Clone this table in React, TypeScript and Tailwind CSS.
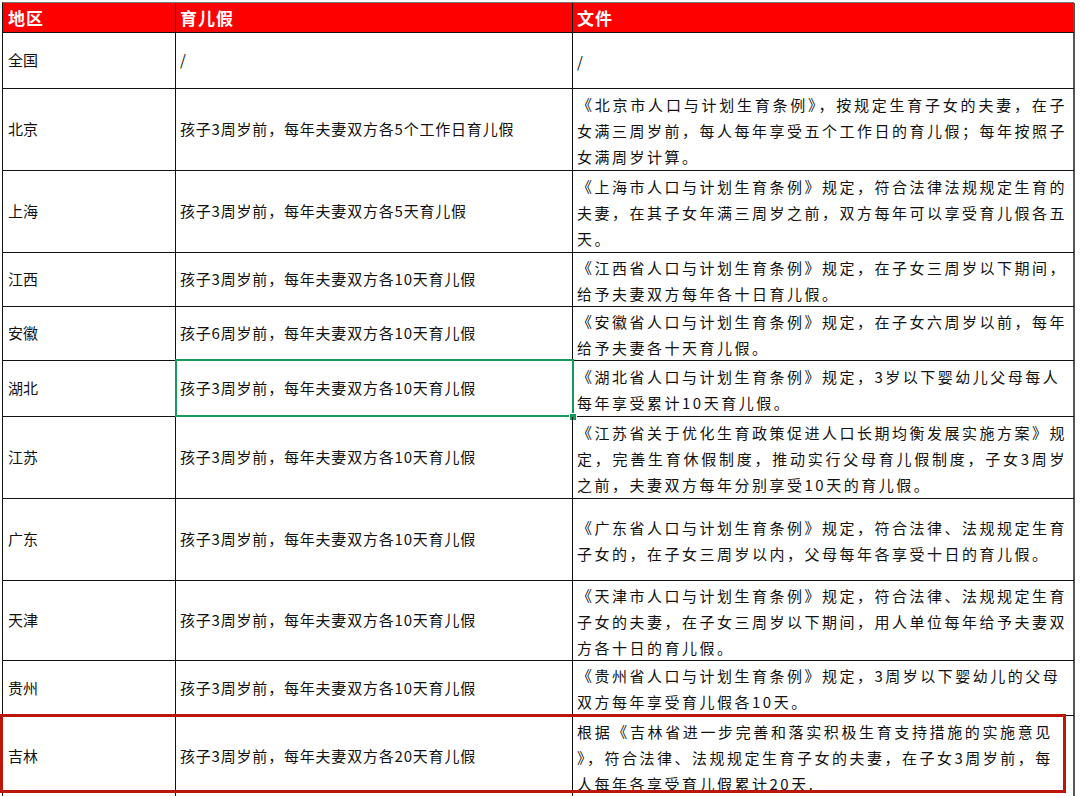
const FONT = "font-['Noto_Sans_CJK_SC','Noto_Sans',sans-serif]";

interface Row {
  region: string;
  leave: string;
  doc: string[];
  h: string;
  selected?: boolean;
}

const rows: Row[] = [
  { region: "全国", leave: "/", doc: ["/"], h: "h-[56px]" },
  {
    region: "北京",
    leave: "孩子3周岁前，每年夫妻双方各5个工作日育儿假",
    doc: [
      "《北京市人口与计划生育条例》，按规定生育子女的夫妻，在子",
      "女满三周岁前，每人每年享受五个工作日的育儿假；每年按照子",
      "女满周岁计算。",
    ],
    h: "h-[82px]",
  },
  {
    region: "上海",
    leave: "孩子3周岁前，每年夫妻双方各5天育儿假",
    doc: [
      "《上海市人口与计划生育条例》规定，符合法律法规规定生育的",
      "夫妻，在其子女年满三周岁之前，双方每年可以享受育儿假各五",
      "天。",
    ],
    h: "h-[82px]",
  },
  {
    region: "江西",
    leave: "孩子3周岁前，每年夫妻双方各10天育儿假",
    doc: ["《江西省人口与计划生育条例》规定，在子女三周岁以下期间，", "给予夫妻双方每年各十日育儿假。"],
    h: "h-[54px]",
  },
  {
    region: "安徽",
    leave: "孩子6周岁前，每年夫妻双方各10天育儿假",
    doc: ["《安徽省人口与计划生育条例》规定，在子女六周岁以前，每年", "给予夫妻各十天育儿假。"],
    h: "h-[54px]",
  },
  {
    region: "湖北",
    leave: "孩子3周岁前，每年夫妻双方各10天育儿假",
    doc: ["《湖北省人口与计划生育条例》规定，3岁以下婴幼儿父母每人", "每年享受累计10天育儿假。"],
    h: "h-[56px]",
    selected: true,
  },
  {
    region: "江苏",
    leave: "孩子3周岁前，每年夫妻双方各10天育儿假",
    doc: [
      "《江苏省关于优化生育政策促进人口长期均衡发展实施方案》规",
      "定，完善生育休假制度，推动实行父母育儿假制度，子女3周岁",
      "之前，夫妻双方每年分别享受10天的育儿假。",
    ],
    h: "h-[82px]",
  },
  {
    region: "广东",
    leave: "孩子3周岁前，每年夫妻双方各10天育儿假",
    doc: ["《广东省人口与计划生育条例》规定，符合法律、法规规定生育", "子女的，在子女三周岁以内，父母每年各享受十日的育儿假。"],
    h: "h-[82px]",
  },
  {
    region: "天津",
    leave: "孩子3周岁前，每年夫妻双方各10天育儿假",
    doc: [
      "《天津市人口与计划生育条例》规定，符合法律、法规规定生育",
      "子女的夫妻，在子女三周岁以下期间，用人单位每年给予夫妻双",
      "方各十日的育儿假。",
    ],
    h: "h-[80px]",
  },
  {
    region: "贵州",
    leave: "孩子3周岁前，每年夫妻双方各10天育儿假",
    doc: ["《贵州省人口与计划生育条例》规定，3周岁以下婴幼儿的父母", "双方每年享受育儿假各10天。"],
    h: "h-[55px]",
  },
  {
    region: "吉林",
    leave: "孩子3周岁前，每年夫妻双方各20天育儿假",
    doc: [
      "根据《吉林省进一步完善和落实积极生育支持措施的实施意见",
      "》，符合法律、法规规定生育子女的夫妻，在子女3周岁前，每",
      "人每年各享受育儿假累计20天.",
    ],
    h: "h-[82px]",
  },
];

function DocCell({ lines }: { lines: string[] }) {
  return (
    <div className="flex flex-col justify-center pt-[2px] pl-[4px] pr-[4px] leading-[26px] tracking-[2.5px]">
      {lines.map((line, i) => (
        <div
          key={i}
          className={
            i < lines.length - 1 && lines.length > 1
              ? "whitespace-nowrap text-justify [text-align-last:justify]"
              : "whitespace-nowrap"
          }
        >
          {line}
        </div>
      ))}
    </div>
  );
}

export default function App() {
  return (
    <div className={`relative w-[1080px] h-[796px] overflow-hidden bg-white ${FONT} text-[15px] text-[#111]`}>
      <div className="pt-[2px] pl-[2px]">
        <div className="grid grid-cols-[173px_397px_502px] w-[1072px] border-t border-l border-t-[#777] border-l-[#111]">
          {/* header */}
          <div className="h-[30px] bg-[#ff0000] border-r border-b border-[#111] pl-[5px] flex items-center text-white font-bold text-[17px] tracking-[1px]">
            地区
          </div>
          <div className="h-[30px] bg-[#ff0000] border-r border-b border-[#111] pl-[4px] flex items-center text-white font-bold text-[17px] tracking-[1px]">
            育儿假
          </div>
          <div className="h-[30px] bg-[#ff0000] border-r-2 border-b border-r-[#555] border-b-[#111] pl-[4px] flex items-center text-white font-bold text-[17px] tracking-[1px]">
            文件
          </div>

          {rows.map((row) => (
            <div key={row.region} className="contents">
              <div className={`${row.h} border-r border-b border-[#111] pl-[5px] flex items-center`}>
                {row.region}
              </div>
              <div className={`${row.h} relative border-r border-b border-[#111] pl-[4px] flex items-center tracking-[0.8px]`}>
                {row.leave}
                {row.selected && (
                  <>
                    <div className="absolute -left-[1px] -top-[2px] -right-[2px] -bottom-[1px] border-2 border-[#159a5d]" />
                    <div className="absolute -right-[5px] -bottom-[5px] w-[8px] h-[8px] bg-[#159a5d] border border-white" />
                  </>
                )}
              </div>
              <div className={`${row.h} border-r-2 border-b border-r-[#555] border-b-[#111] flex`}>
                <DocCell lines={row.doc} />
              </div>
            </div>
          ))}
        </div>
      </div>

      {/* annotation box around 吉林 row */}
      <div className="absolute left-0 top-[714px] w-[1066px] h-[79px] border-[3px] border-[#be150b]" />
    </div>
  );
}
